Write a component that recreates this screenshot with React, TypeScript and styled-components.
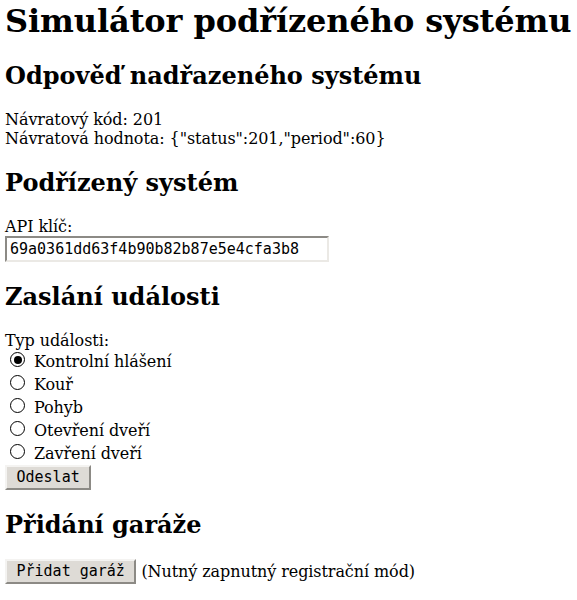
import React from "react";
import styled, { createGlobalStyle } from "styled-components";

const Global = createGlobalStyle`
  html, body { background: #fff; }
  body {
    margin: 0;
    padding: 2px 5px 0 5px;
    font-family: "DejaVu Serif", serif;
    font-size: 16px;
    letter-spacing: -0.08px;
    color: #000;
  }
`;

const Title = styled.h1`
  font-size: 32px;
  font-weight: bold;
  margin: 0 0 21px 0;
  line-height: normal;
  letter-spacing: -0.1px;
  white-space: nowrap;
`;

const Heading = styled.h2`
  font-size: 24px;
  font-weight: bold;
  margin: 20px 0;
  line-height: normal;
  letter-spacing: 0;
`;

const Line = styled.div`
  line-height: normal;
`;

const KeyInput = styled.input`
  display: block;
  box-sizing: border-box;
  width: 324px;
  height: 26px;
  margin: 0;
  padding: 1px 3px;
  font-family: "DejaVu Sans Mono", monospace;
  font-size: 15px;
  letter-spacing: 0;
  color: #000;
  background: #fff;
  border: 2px solid;
  border-color: #8c8a85 #ebe9e5 #ebe9e5 #8c8a85;
  outline: none;
`;

const RadioRow = styled.label`
  display: flex;
  align-items: center;
  height: 23px;
  gap: 9px;
  padding-left: 5px;
`;

const RadioDot = styled.span<{ $checked: boolean }>`
  box-sizing: border-box;
  width: 15px;
  height: 15px;
  border-radius: 50%;
  border: 1.3px solid #000;
  background: #fff;
  display: flex;
  align-items: center;
  justify-content: center;
  margin-top: -4px;
  &::after {
    content: "";
    width: 8px;
    height: 8px;
    border-radius: 50%;
    background: #000;
    display: ${(p) => (p.$checked ? "block" : "none")};
  }
`;

const Button = styled.button`
  box-sizing: border-box;
  font-family: "DejaVu Sans Mono", monospace;
  font-size: 15px;
  line-height: 17px;
  letter-spacing: 0;
  color: #000;
  background: #dedbd6;
  border: 2px solid;
  border-color: #f4f3f1 #8c8a85 #8c8a85 #f4f3f1;
  border-radius: 0;
  padding: 1px 9.5px;
  height: 25px;
  margin: 0;
`;

const ButtonRow = styled.div`
  margin: 20px 0 0 0;
  display: flex;
  align-items: center;
  gap: 5px;
  line-height: normal;
`;

const events = [
  "Kontrolní hlášení",
  "Kouř",
  "Pohyb",
  "Otevření dveří",
  "Zavření dveří",
];

export default function App() {
  return (
    <>
      <Global />
      <Title>Simulátor podřízeného systému</Title>
      <Heading>Odpověď nadřazeného systému</Heading>
      <Line>Návratový kód: 201</Line>
      <Line>Návratová hodnota: {'{"status":201,"period":60}'}</Line>
      <Heading>Podřízený systém</Heading>
      <Line>API klíč:</Line>
      <KeyInput defaultValue="69a0361dd63f4b90b82b87e5e4cfa3b8" />
      <Heading>Zaslání události</Heading>
      <Line>Typ události:</Line>
      {events.map((e, i) => (
        <RadioRow key={e}>
          <RadioDot $checked={i === 0} />
          <span>{e}</span>
        </RadioRow>
      ))}
      <Button>Odeslat</Button>
      <Heading>Přidání garáže</Heading>
      <ButtonRow>
        <Button>Přidat garáž</Button>
        <span>(Nutný zapnutný registrační mód)</span>
      </ButtonRow>
    </>
  );
}
